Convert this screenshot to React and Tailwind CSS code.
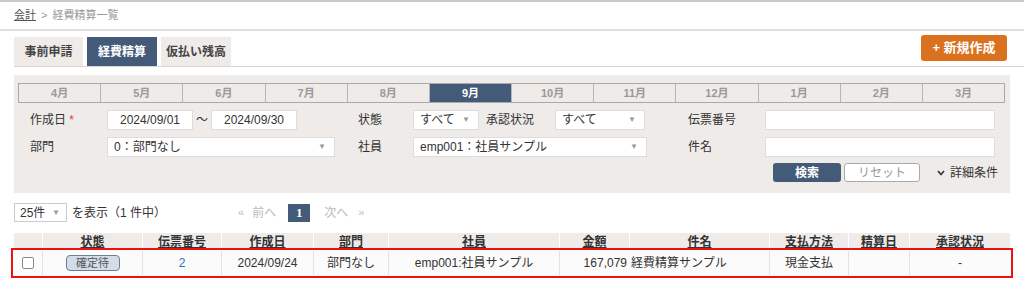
import React from "react";

const months = ["4月", "5月", "6月", "7月", "8月", "9月", "10月", "11月", "12月", "1月", "2月", "3月"];

const cols = [
  { w: "w-[28px]", label: "" },
  { w: "w-[100px]", label: "状態" },
  { w: "w-[79px]", label: "伝票番号" },
  { w: "w-[92px]", label: "作成日" },
  { w: "w-[75px]", label: "部門" },
  { w: "w-[171px]", label: "社員" },
  { w: "w-[70px]", label: "金額" },
  { w: "w-[140px]", label: "件名" },
  { w: "w-[79px]", label: "支払方法" },
  { w: "w-[61px]", label: "精算日" },
  { w: "w-[101px]", label: "承認状況" },
];

const Caret = () => <span className="text-[8px] text-[#999]">▼</span>;

const Input = ({ w, value, center }) => (
  <div
    className={`${w} h-[20px] bg-white border border-[#ddd] flex items-center px-[6px] text-[12px] text-[#333] ${
      center ? "justify-center" : ""
    }`}
  >
    {value}
  </div>
);

const Select = ({ w, value }) => (
  <div className={`${w} h-[20px] bg-white border border-[#ddd] flex items-center justify-between pl-[6px] pr-[8px] text-[12px] text-[#333]`}>
    <span>{value}</span>
    <Caret />
  </div>
);

const App = () => {
  return (
    <div className="w-[1024px] h-[285px] bg-white overflow-hidden text-[12px] text-[#333] font-['Liberation_Sans','Noto_Sans_CJK_JP',sans-serif]">
      <div className="h-[2px] bg-[#c9c9c9]" />
      <div className="h-[27px] px-[14px] flex items-center gap-[5px] text-[11px] text-[#999]">
        <span className="underline text-[#555]">会計</span>
        <span>&gt;</span>
        <span>経費精算一覧</span>
      </div>
      <div className="h-[2px] bg-[#e0e0e0]" />

      {/* tabs */}
      <div className="flex justify-between items-start pl-[14px] pr-[17px] pt-[4px]">
        <div className="flex gap-[4px] pt-[2px]">
          <div className="w-[69px] h-[29px] bg-[#eeebe9] flex items-center justify-center font-bold text-[#444]">事前申請</div>
          <div className="w-[70px] h-[29px] bg-[#435a78] flex items-center justify-center font-bold text-white">経費精算</div>
          <div className="w-[70px] h-[29px] bg-[#eeebe9] flex items-center justify-center font-bold text-[#444]">仮払い残高</div>
        </div>
        <button className="w-[86px] h-[26px] rounded-[3px] bg-[#d9711f] text-white font-bold text-[13px]">+ 新規作成</button>
      </div>
      <div className="ml-[14px] h-[1px] bg-[#d6d6d6]" />

      {/* filter panel */}
      <div className="mx-[14px] mt-[8px] h-[118px] bg-[#eeebe9] pt-[8px]">
        <div className="mx-[4px] w-[987px] flex border border-[#a9a9a9] h-[20px]">
          {months.map((m, i) => (
            <div
              key={m}
              className={`flex-1 flex items-center justify-center text-[11px] font-bold ${
                i > 0 ? "border-l border-[#b5b5b5]" : ""
              } ${m === "9月" ? "bg-[#435a78] text-white" : "text-[#999]"}`}
            >
              {m}
            </div>
          ))}
        </div>

        <div className="flex items-center pl-[16px] mt-[7px]">
          <div className="w-[77px]">
            作成日 <span className="text-[#e03a3a]">*</span>
          </div>
          <Input w="w-[86px]" value="2024/09/01" center />
          <div className="w-[18px] text-center">〜</div>
          <Input w="w-[86px]" value="2024/09/30" center />
          <div className="ml-[61px] w-[55px]">状態</div>
          <Select w="w-[66px]" value="すべて" />
          <div className="ml-[7px] w-[69px]">承認状況</div>
          <Select w="w-[90px]" value="すべて" />
          <div className="ml-[43px] w-[77px]">伝票番号</div>
          <Input w="w-[230px]" value="" />
        </div>

        <div className="flex items-center pl-[16px] mt-[7px]">
          <div className="w-[77px]">部門</div>
          <Select w="w-[228px]" value="0：部門なし" />
          <div className="ml-[23px] w-[55px]">社員</div>
          <Select w="w-[234px]" value="emp001：社員サンプル" />
          <div className="ml-[41px] w-[77px]">件名</div>
          <Input w="w-[230px]" value="" />
        </div>

        <div className="flex items-center justify-end pr-[12px] mt-[6px]">
          <button className="w-[68px] h-[19px] rounded-[3px] bg-[#435a78] text-white font-bold text-[12px]">検索</button>
          <button className="ml-[3px] w-[76px] h-[19px] rounded-[3px] bg-white border border-[#aaa] text-[#999] text-[12px]">リセット</button>
          <div className="ml-[17px] flex items-center gap-[5px]">
            <svg width="8" height="6" viewBox="0 0 8 6">
              <path d="M1 1 L4 4.5 L7 1" stroke="#333" strokeWidth="1.6" fill="none" />
            </svg>
            <span>詳細条件</span>
          </div>
        </div>
      </div>

      {/* list controls */}
      <div className="flex items-center pl-[14px] mt-[10px] h-[19px]">
        <div className="w-[53px] h-[19px] bg-white border border-[#ccc] flex items-center justify-between pl-[5px] pr-[6px]">
          <span>25件</span>
          <Caret />
        </div>
        <span className="ml-[5px]">を表示（1 件中）</span>
        <div className="ml-[72px] flex items-center text-[#bbb]">
          <span className="text-[11px]">«</span>
          <span className="ml-[8px]">前へ</span>
          <div className="ml-[12px] w-[22px] h-[18px] bg-[#435a78] text-white font-bold flex items-center justify-center font-['Liberation_Serif',serif] text-[13px]">
            1
          </div>
          <span className="ml-[14px]">次へ</span>
          <span className="ml-[10px] text-[11px]">»</span>
        </div>
      </div>

      {/* table */}
      <div className="ml-[14px] mt-[11px] w-[996px]">
        <div className="flex h-[17px] bg-[#eeebe9]">
          {cols.map((c, i) => (
            <div
              key={i}
              className={`${c.w} flex items-center justify-center underline font-bold text-[#333] ${i > 0 ? "border-l border-white" : ""}`}
            >
              {c.label}
            </div>
          ))}
        </div>
        <div className="flex h-[24px] mt-[1px] bg-[#fbfbfb] outline-2 outline-[#ee1111] outline-offset-[1px]">
          <div className="w-[28px] flex items-center justify-center">
            <div className="w-[12px] h-[12px] border border-[#888] rounded-[2px] bg-white" />
          </div>
          <div className="w-[100px] border-l border-[#e2e2e2] flex items-center justify-center">
            <div className="w-[54px] h-[16px] rounded-[4px] border border-[#6b7f95] bg-[#d3dce7] text-[11px] text-[#555] flex items-center justify-center">
              確定待
            </div>
          </div>
          <div className="w-[79px] border-l border-[#e2e2e2] flex items-center justify-center text-[#2a72c0]">2</div>
          <div className="w-[92px] border-l border-[#e2e2e2] flex items-center justify-center">2024/09/24</div>
          <div className="w-[75px] border-l border-[#e2e2e2] flex items-center justify-center">部門なし</div>
          <div className="w-[171px] border-l border-[#e2e2e2] flex items-center justify-center">emp001:社員サンプル</div>
          <div className="w-[70px] border-l border-[#e2e2e2] flex items-center justify-end pr-[2px]">167,079</div>
          <div className="w-[140px] flex items-center pl-[2px]">経費精算サンプル</div>
          <div className="w-[79px] border-l border-[#e2e2e2] flex items-center justify-center">現金支払</div>
          <div className="w-[61px] border-l border-[#e2e2e2]" />
          <div className="w-[101px] border-l border-[#e2e2e2] flex items-center justify-center">-</div>
        </div>
      </div>
    </div>
  );
};

export default App;
